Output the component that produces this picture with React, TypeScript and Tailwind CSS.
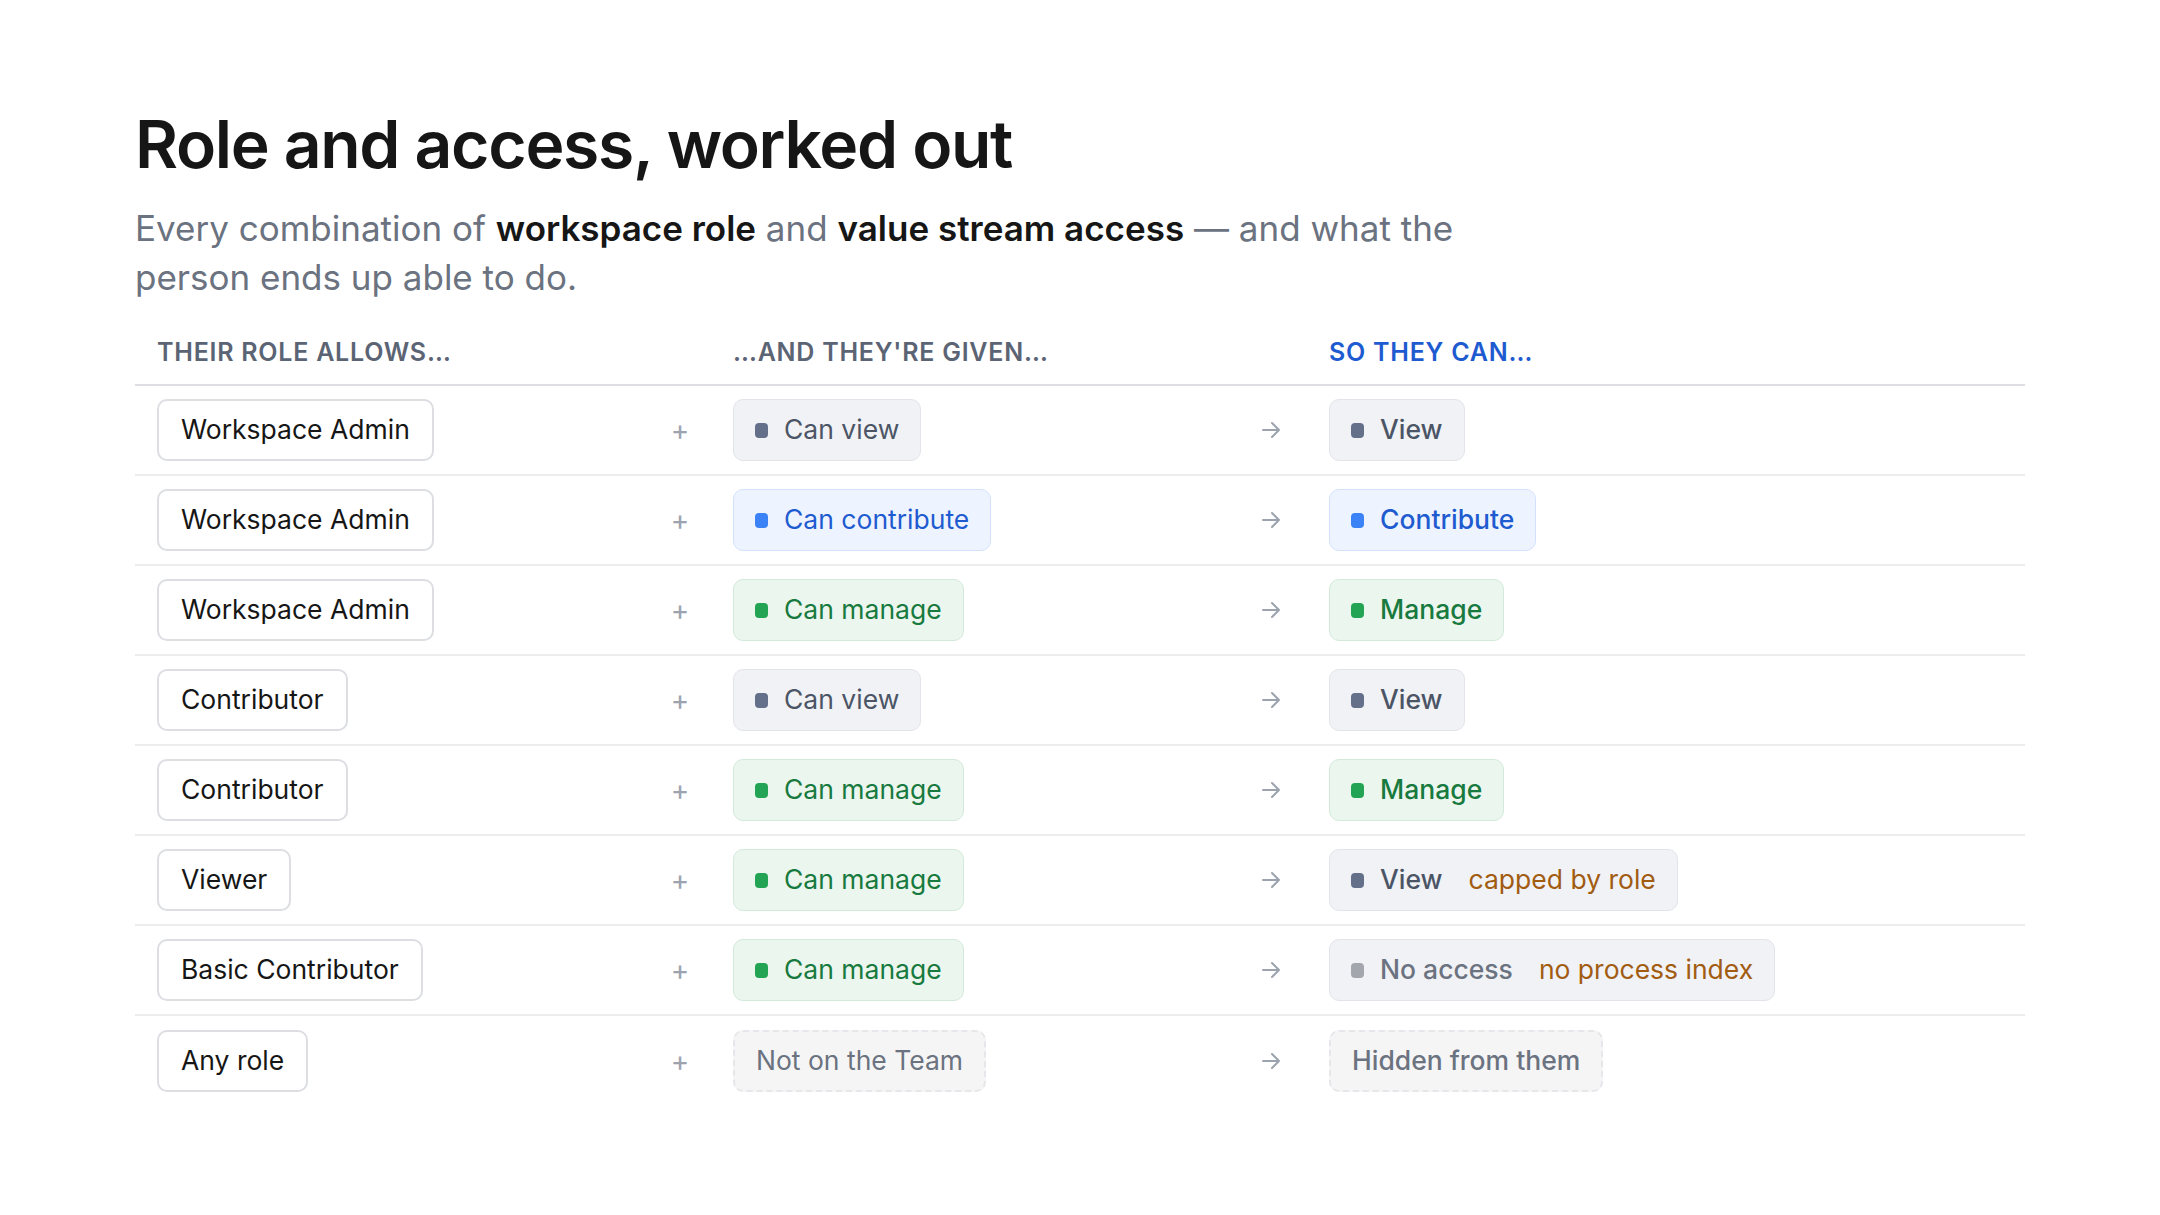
import React from "react";

type K = "view" | "contrib" | "manage" | "none" | "dashed";
const S: Record<K, { box: string; dot: string; text: string }> = {
  view: { box: "bg-[#f1f2f5] border border-[#e2e4ea]", dot: "bg-[#64708a]", text: "text-[#4b5566]" },
  contrib: { box: "bg-[#eef4ff] border border-[#d3e2fc]", dot: "bg-[#3b82f6]", text: "text-[#1f5bd0]" },
  manage: { box: "bg-[#ebf6ee] border border-[#d3eadb]", dot: "bg-[#23a455]", text: "text-[#187a3e]" },
  none: { box: "bg-[#f1f2f5] border border-[#e2e4ea]", dot: "bg-[#a3a6ad]", text: "text-[#6b7280]" },
  dashed: { box: "bg-[#f5f5f6] border-2 border-dashed border-[#e6e7ea]", dot: "", text: "text-[#6b7280]" },
};

function Pill({ k, label, bold, note }: { k: K; label: string; bold?: boolean; note?: string }) {
  const s = S[k];
  return (
    <span className={`inline-flex items-center h-[62px] px-[21px] rounded-[10px] text-[26.5px] ${s.box} ${s.text} ${bold ? "font-medium" : ""}`}>
      {k !== "dashed" && <span className={`w-[13px] h-[15px] rounded-[4px] mr-[16px] ${s.dot}`} />}
      {label}
      {note && <span className="ml-[26px] font-normal text-[#a15c12]">{note}</span>}
    </span>
  );
}

const rows: { role: string; given: [K, string]; res: [K, string, string?] }[] = [
  { role: "Workspace Admin", given: ["view", "Can view"], res: ["view", "View"] },
  { role: "Workspace Admin", given: ["contrib", "Can contribute"], res: ["contrib", "Contribute"] },
  { role: "Workspace Admin", given: ["manage", "Can manage"], res: ["manage", "Manage"] },
  { role: "Contributor", given: ["view", "Can view"], res: ["view", "View"] },
  { role: "Contributor", given: ["manage", "Can manage"], res: ["manage", "Manage"] },
  { role: "Viewer", given: ["manage", "Can manage"], res: ["view", "View", "capped by role"] },
  { role: "Basic Contributor", given: ["manage", "Can manage"], res: ["none", "No access", "no process index"] },
  { role: "Any role", given: ["dashed", "Not on the Team"], res: ["dashed", "Hidden from them"] },
];

export default function App() {
  return (
    <div className="w-[2160px] h-[1215px] bg-white pl-[135px] pr-[135px] pt-[104px]" style={{ fontFamily: "Inter, 'Noto Sans', sans-serif" }}>
      <h1 className="text-[66px] font-semibold tracking-[-0.02em] text-[#161616] leading-[80px]">Role and access, worked out</h1>
      <p className="mt-[20px] text-[35px] leading-[49px] text-[#6b7280] w-[1400px]">
        Every combination of <b className="font-semibold text-[#161616]">workspace role</b> and{" "}
        <b className="font-semibold text-[#161616]">value stream access</b> — and what the person ends up able to do.
      </p>
      <div className="mt-[20px] flex items-center h-[64px] pl-[22px] text-[25px] font-semibold tracking-[0.03em] border-b-2 border-[#dedfe4]">
        <div className="w-[546px] text-[#5b6474]">THEIR ROLE ALLOWS…</div>
        <div className="w-[30px]" />
        <div className="w-[596px] text-[#5b6474]">…AND THEY'RE GIVEN…</div>
        <div className="text-[#1f5bd0]">SO THEY CAN…</div>
      </div>
      {rows.map((r, i) => (
        <div key={i} className={`flex items-center h-[90px] pl-[22px] ${i < rows.length - 1 ? "border-b-2 border-[#ececef]" : ""}`}>
          <div className="w-[500px]">
            <span className="inline-flex items-center h-[62px] px-[22px] rounded-[10px] border-2 border-[#dcdee2] bg-white text-[26.5px] text-[#161616]">{r.role}</span>
          </div>
          <div className="w-[46px] text-center text-[28px] text-[#9ca3af]">+</div>
          <div className="w-[30px]" />
          <div className="w-[518px]"><Pill k={r.given[0]} label={r.given[1]} /></div>
          <div className="w-[40px] flex justify-center text-[#9ca3af]">
            <svg width="20" height="18" viewBox="0 0 20 18" fill="none" stroke="currentColor" strokeWidth="2" strokeLinecap="round" strokeLinejoin="round"><path d="M2 9h16M11 2l7 7-7 7" /></svg>
          </div>
          <div className="w-[38px]" />
          <div><Pill k={r.res[0]} label={r.res[1]} bold note={r.res[2]} /></div>
        </div>
      ))}
    </div>
  );
}
